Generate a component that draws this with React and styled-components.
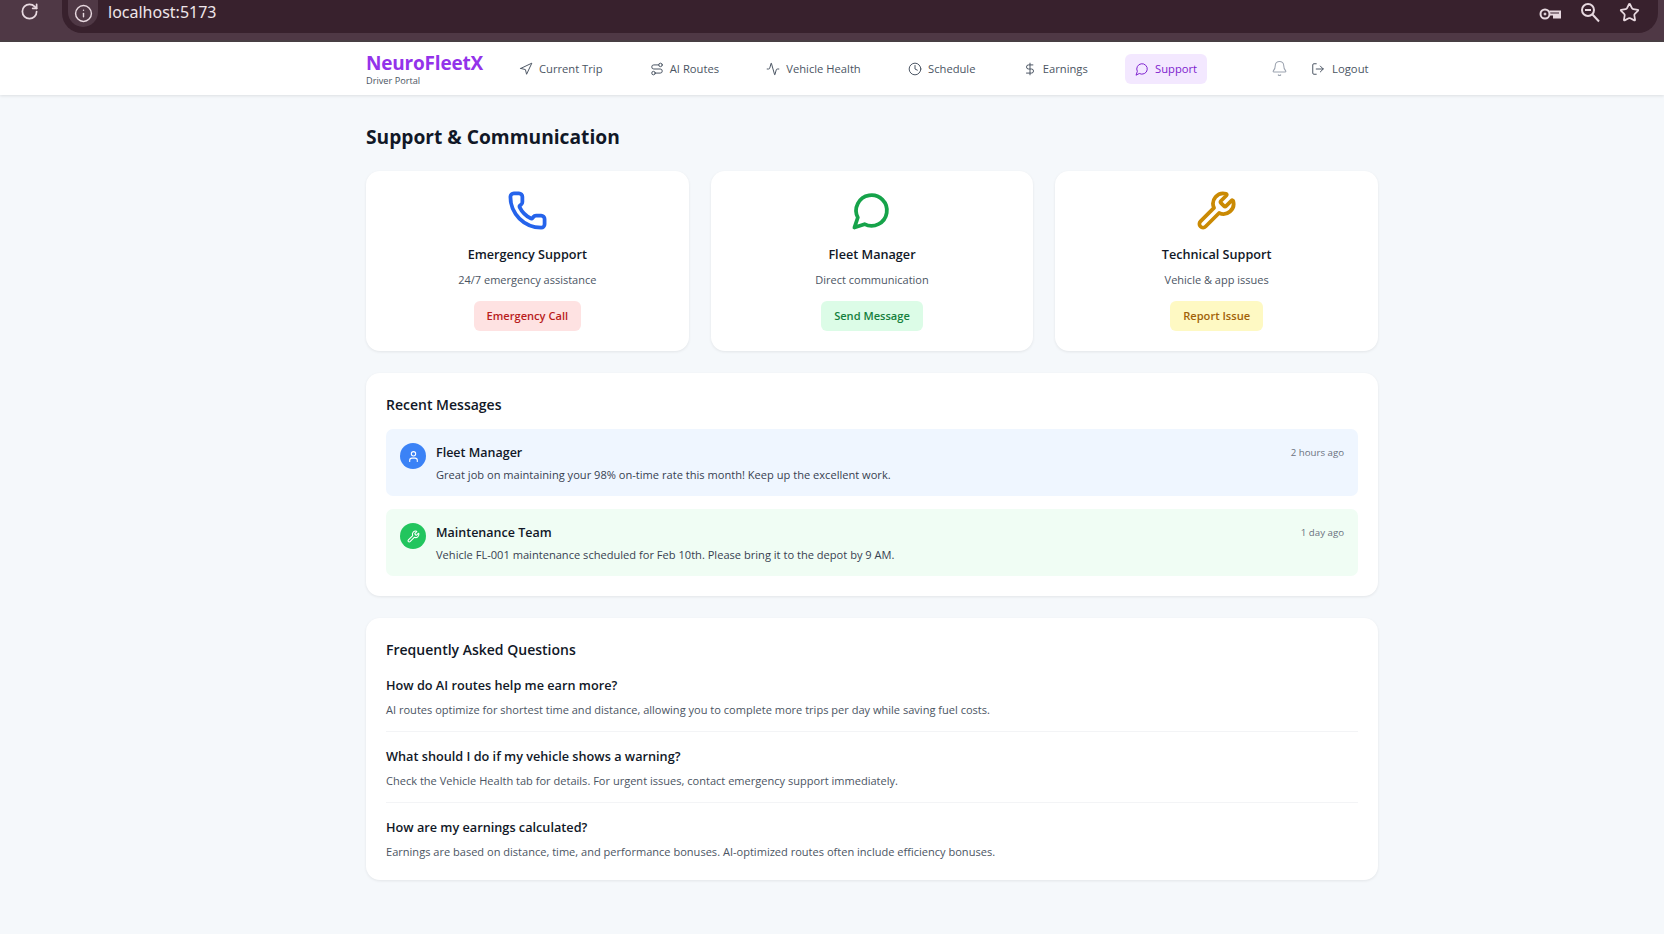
import React from 'react';
import styled, { createGlobalStyle } from 'styled-components';
import { Navigation, Route, Activity, Clock, DollarSign, Bell, LogOut, Phone, Wrench, User, RotateCw, Info, Star } from 'lucide-react';

// the screenshot has the older bubble with a pointed tail
const Bubble = ({ size = 24, color = 'currentColor', strokeWidth = 2 }) => (
  <svg width={size} height={size} viewBox="0 0 24 24" fill="none" stroke={color} strokeWidth={strokeWidth} strokeLinecap="round" strokeLinejoin="round">
    <path d="M7.9 20A9 9 0 1 0 4 16.1L2 22Z" />
  </svg>
);

const navItems = [
  { label: 'Current Trip', icon: Navigation },
  { label: 'AI Routes', icon: Route },
  { label: 'Vehicle Health', icon: Activity },
  { label: 'Schedule', icon: Clock },
  { label: 'Earnings', icon: DollarSign },
  { label: 'Support', icon: Bubble, active: true },
];

const contactCards = [
  { title: 'Emergency Support', text: '24/7 emergency assistance', action: 'Emergency Call', icon: Phone, color: '#2563eb', bg: '#fee2e2', fg: '#b91c1c' },
  { title: 'Fleet Manager', text: 'Direct communication', action: 'Send Message', icon: Bubble, color: '#16a34a', bg: '#dcfce7', fg: '#15803d' },
  { title: 'Technical Support', text: 'Vehicle & app issues', action: 'Report Issue', icon: Wrench, color: '#ca8a04', bg: '#fef9c3', fg: '#a16207' },
];

const messages = [
  { from: 'Fleet Manager', time: '2 hours ago', text: 'Great job on maintaining your 98% on-time rate this month! Keep up the excellent work.', icon: User, bg: '#eff6ff', badge: '#3b82f6' },
  { from: 'Maintenance Team', time: '1 day ago', text: 'Vehicle FL-001 maintenance scheduled for Feb 10th. Please bring it to the depot by 9 AM.', icon: Wrench, bg: '#f0fdf4', badge: '#22c55e' },
];

const faqs = [
  { q: 'How do AI routes help me earn more?', a: 'AI routes optimize for shortest time and distance, allowing you to complete more trips per day while saving fuel costs.' },
  { q: 'What should I do if my vehicle shows a warning?', a: 'Check the Vehicle Health tab for details. For urgent issues, contact emergency support immediately.' },
  { q: 'How are my earnings calculated?', a: 'Earnings are based on distance, time, and performance bonuses. AI-optimized routes often include efficiency bonuses.' },
];

const KeyIcon = () => (
  <svg width="24" height="24" viewBox="0 0 24 24" fill="none" stroke="#e6d8df" strokeWidth="2">
    <circle cx="7" cy="12" r="4.5" />
    <circle cx="7" cy="12" r="1" fill="#e6d8df" strokeWidth="1" />
    <path d="M11.5 9.5h10.5v6h-2v-3h-2v3h-2v-3h-4.5" />
  </svg>
);

const LensIcon = () => (
  <svg width="21" height="21" viewBox="0 0 21 21" fill="none" stroke="#e6d8df" strokeWidth="2">
    <circle cx="8" cy="8" r="6" />
    <path d="M5 8h6M12.5 12.5l6.5 7" />
  </svg>
);

export default function App() {
  return (
    <>
      <GlobalStyle />
      <BrowserBar>
        <ChromeRow>
          <ReloadSlot><RotateCw size={19} strokeWidth={2.2} /></ReloadSlot>
          <AddressBar>
            <InfoChip><Info size={19} strokeWidth={1.8} /></InfoChip>
            <Url>localhost:5173</Url>
            <AddressIcons>
              <KeyIcon />
              <LensIcon />
              <Star size={21} strokeWidth={2} />
            </AddressIcons>
          </AddressBar>
        </ChromeRow>
      </BrowserBar>

      <TopNav>
        <NavInner>
          <Brand>
            <BrandName>NeuroFleetX</BrandName>
            <BrandSub>Driver Portal</BrandSub>
          </Brand>
          <NavLinks>
            {navItems.map(({ label, icon: Icon, active }) => (
              <NavLink key={label} $active={active}>
                <Icon size={14} strokeWidth={1.7} />
                {label}
              </NavLink>
            ))}
          </NavLinks>
          <NavRight>
            <BellSlot><Bell size={17} strokeWidth={1.5} /></BellSlot>
            <LogoutLink><LogOut size={14} strokeWidth={1.7} />Logout</LogoutLink>
          </NavRight>
        </NavInner>
      </TopNav>

      <Main>
        <PageTitle>Support &amp; Communication</PageTitle>

        <CardGrid>
          {contactCards.map(({ title, text, action, icon: Icon, color, bg, fg }) => (
            <ContactCard key={title}>
              <Icon size={41} color={color} strokeWidth={2.2} />
              <CardTitle>{title}</CardTitle>
              <CardText>{text}</CardText>
              <ActionButton $bg={bg} $fg={fg}>{action}</ActionButton>
            </ContactCard>
          ))}
        </CardGrid>

        <Panel>
          <PanelTitle>Recent Messages</PanelTitle>
          <MessageList>
            {messages.map(({ from, time, text, icon: Icon, bg, badge }) => (
              <MessageRow key={from} $bg={bg}>
                <Avatar $bg={badge}><Icon size={13} color="#fff" strokeWidth={2} /></Avatar>
                <MessageBody>
                  <MessageHead>
                    <MessageFrom>{from}</MessageFrom>
                    <MessageTime>{time}</MessageTime>
                  </MessageHead>
                  <MessageText>{text}</MessageText>
                </MessageBody>
              </MessageRow>
            ))}
          </MessageList>
        </Panel>

        <FaqPanel>
          <PanelTitle>Frequently Asked Questions</PanelTitle>
          <FaqList>
            {faqs.map(({ q, a }, i) => (
              <FaqItem key={q} $last={i === faqs.length - 1}>
                <FaqQuestion>{q}</FaqQuestion>
                <FaqAnswer>{a}</FaqAnswer>
              </FaqItem>
            ))}
          </FaqList>
        </FaqPanel>
      </Main>
    </>
  );
}

const GlobalStyle = createGlobalStyle`
  * { box-sizing: border-box; }
  html, body { margin: 0; padding: 0; }
  body {
    background: #f5f8fb;
    font-family: "Open Sans", "Noto Sans", sans-serif;
    color: #111827;
    min-height: 934px;
  }
`;

const BrowserBar = styled.div`
  height: 42px;
  background: #4f3845;
  border-bottom: 2px solid #4a4045;
`;

const ChromeRow = styled.div`
  display: flex;
  height: 33px;
  padding-right: 6px;
`;

const ReloadSlot = styled.div`
  width: 62px;
  padding: 2px 0 0 20px;
  color: #e8d9e0;
`;

const AddressBar = styled.div`
  flex: 1;
  display: flex;
  align-items: flex-start;
  background: #38212d;
  border-radius: 0 0 20px 20px;
  padding-left: 6px;
  color: #e8d9e0;
`;

const InfoChip = styled.div`
  width: 30px;
  height: 27px;
  border-radius: 0 0 15px 15px;
  background: #4f3845;
  display: flex;
  align-items: center;
  justify-content: center;
`;

const Url = styled.div`
  margin-left: 10px;
  font-family: "Noto Sans", sans-serif;
  font-size: 16px;
  line-height: 25px;
  color: #efe6ea;
`;

const AddressIcons = styled.div`
  margin-left: auto;
  display: flex;
  gap: 18px;
  padding: 2px 18px 0 0;
`;

const TopNav = styled.header`
  height: 53px;
  background: #fff;
  box-shadow: 0 1px 3px rgba(0, 0, 0, 0.1);
`;

const NavInner = styled.div`
  width: 1012px;
  height: 100%;
  margin-left: 366px;
  display: flex;
  align-items: center;
`;

const Brand = styled.div`
  width: 143px;
  padding-top: 2px;
`;

const BrandName = styled.div`
  font-size: 19px;
  line-height: 22px;
  font-weight: 700;
  color: #9333ea;
  letter-spacing: -0.2px;
`;

const BrandSub = styled.div`
  font-size: 9.2px;
  line-height: 13px;
  color: #4b5563;
`;

const NavLinks = styled.nav`
  display: flex;
  align-items: center;
  gap: 27.3px;
`;

const NavLink = styled.a`
  display: flex;
  align-items: center;
  gap: 6px;
  height: 30px;
  padding: 0 10px;
  border-radius: 6px;
  font-size: 11.2px;
  font-weight: 500;
  white-space: nowrap;
  color: ${(p) => (p.$active ? '#7e22ce' : '#4b5563')};
  background: ${(p) => (p.$active ? '#f3e8ff' : 'transparent')};
  svg { color: ${(p) => (p.$active ? '#7e22ce' : '#4b5563')}; }
`;

const NavRight = styled.div`
  display: flex;
  align-items: center;
  gap: 23px;
  margin-left: 64px;
`;

const BellSlot = styled.div`
  display: flex;
  color: #9ca3af;
`;

const LogoutLink = styled.a`
  display: flex;
  align-items: center;
  gap: 7px;
  font-size: 11.3px;
  font-weight: 500;
  color: #4b5563;
`;

const Main = styled.main`
  width: 1012px;
  margin-left: 366px;
  padding: 26px 0 0;
`;

const PageTitle = styled.h1`
  margin: 0 0 18px;
  font-size: 19.2px;
  line-height: 32px;
  font-weight: 700;
  color: #111827;
`;

const CardGrid = styled.div`
  display: grid;
  grid-template-columns: repeat(3, 1fr);
  gap: 22px;
`;

const ContactCard = styled.div`
  height: 180px;
  padding-top: 19px;
  background: #fff;
  border-radius: 14px;
  box-shadow: 0 1px 3px rgba(0, 0, 0, 0.08);
  display: flex;
  flex-direction: column;
  align-items: center;
`;

const CardTitle = styled.h3`
  margin: 13px 0 0;
  font-size: 12.65px;
  line-height: 20px;
  font-weight: 600;
  color: #111827;
`;

const CardText = styled.p`
  margin: 7px 0 0;
  font-size: 11px;
  line-height: 18px;
  color: #4b5563;
`;

const ActionButton = styled.button`
  margin-top: 12px;
  height: 30px;
  padding: 0 13px 2px;
  border: none;
  border-radius: 6px;
  font-family: inherit;
  font-size: 11.1px;
  font-weight: 600;
  background: ${(p) => p.$bg};
  color: ${(p) => p.$fg};
`;

const Panel = styled.section`
  margin-top: 22px;
  height: 223px;
  padding: 21px 20px;
  background: #fff;
  border-radius: 14px;
  box-shadow: 0 1px 3px rgba(0, 0, 0, 0.08);
`;

const FaqPanel = styled(Panel)`
  height: 262px;
`;

const PanelTitle = styled.h2`
  margin: 0 0 13px;
  font-size: 14px;
  line-height: 22px;
  font-weight: 600;
  color: #111827;
`;

const MessageList = styled.div`
  display: flex;
  flex-direction: column;
  gap: 13px;
`;

const MessageRow = styled.div`
  height: 67px;
  display: flex;
  gap: 10px;
  padding: 14px;
  border-radius: 7px;
  background: ${(p) => p.$bg};
`;

const Avatar = styled.div`
  flex: none;
  width: 26px;
  height: 26px;
  border-radius: 50%;
  background: ${(p) => p.$bg};
  display: flex;
  align-items: center;
  justify-content: center;
`;

const MessageBody = styled.div`
  flex: 1;
  padding-top: 1px;
`;

const MessageHead = styled.div`
  display: flex;
  justify-content: space-between;
  align-items: flex-start;
  height: 18px;
`;

const MessageFrom = styled.div`
  font-size: 12.5px;
  line-height: 18px;
  font-weight: 600;
  color: #111827;
`;

const MessageTime = styled.div`
  font-size: 9.7px;
  line-height: 18px;
  color: #6b7280;
`;

const MessageText = styled.p`
  margin: 4px 0 0;
  font-size: 11.1px;
  line-height: 17px;
  color: #374151;
`;

const FaqList = styled.div`
  padding-top: 2px;
`;

const FaqItem = styled.div`
  padding: ${(p) => (p.$last ? '0' : '0 0 13px')};
  margin-bottom: 15px;
  border-bottom: ${(p) => (p.$last ? 'none' : '1px solid #f3f4f6')};
`;

const FaqQuestion = styled.h4`
  margin: 0;
  font-size: 12.7px;
  line-height: 18px;
  font-weight: 600;
  color: #111827;
`;

const FaqAnswer = styled.p`
  margin: 7px 0 0;
  font-size: 11.05px;
  line-height: 17px;
  color: #4b5563;
`;
